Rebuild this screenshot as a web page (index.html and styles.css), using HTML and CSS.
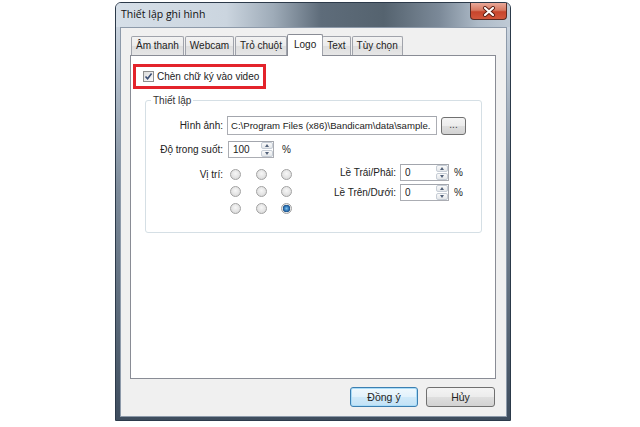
FILE: index.html
```html
<!DOCTYPE html>
<html>
<head>
<meta charset="UTF-8">
<title>Thiết lập ghi hình</title>
<link rel="stylesheet" href="styles.css">
</head>
<body>
<div class="window">
  <div class="titlebar">
    <span class="title">Thiết lập ghi hình</span>
    <span class="close">
      <svg width="14" height="11" viewBox="0 0 14 11">
        <path d="M3 2 L11 9 M11 2 L3 9" stroke="#5a1c12" stroke-width="4" stroke-linecap="round"/>
        <path d="M3 2 L11 9 M11 2 L3 9" stroke="#fff" stroke-width="2.2" stroke-linecap="round"/>
      </svg>
    </span>
  </div>
  <div class="frame">
    <div class="client">
      <div class="tabs">
        <div class="tab">Âm thanh</div>
        <div class="tab">Webcam</div>
        <div class="tab">Trỏ chuột</div>
        <div class="tab active">Logo</div>
        <div class="tab">Text</div>
        <div class="tab">Tùy chọn</div>
      </div>
      <div class="panel">
        <div class="highlight">
          <span class="check">
            <svg width="9" height="9" viewBox="0 0 9 9">
              <path d="M1.5 4.5 L3.6 6.8 L7.6 1.6" fill="none" stroke="#3b4f75" stroke-width="1.6"/>
            </svg>
          </span>
          <span>Chèn chữ ký vào video</span>
        </div>
        <fieldset class="group">
          <legend>Thiết lập</legend>
          <div class="row">
            <span class="lbl">Hình ảnh:</span>
            <span class="edit path">C:\Program Files (x86)\Bandicam\data\sample.</span>
            <span class="btn browse">...</span>
          </div>
          <div class="row">
            <span class="lbl">Độ trong suốt:</span>
            <span class="spin alpha">
              <span class="val">100</span>
              <span class="arrows"><span class="up"><i></i></span><span class="down"><i></i></span></span>
            </span>
            <span class="pct">%</span>
          </div>
          <div class="row pos">
            <span class="lbl top">Vị trí:</span>
            <div class="radios">
              <span class="radio"></span><span class="radio"></span><span class="radio"></span>
              <span class="radio"></span><span class="radio"></span><span class="radio"></span>
              <span class="radio"></span><span class="radio"></span><span class="radio on"></span>
            </div>
            <div class="margins">
              <div class="mrow">
                <span class="mlbl">Lề Trái/Phải:</span>
                <span class="spin small">
                  <span class="val">0</span>
                  <span class="arrows"><span class="up"><i></i></span><span class="down"><i></i></span></span>
                </span>
                <span class="pct">%</span>
              </div>
              <div class="mrow">
                <span class="mlbl">Lề Trên/Dưới:</span>
                <span class="spin small">
                  <span class="val">0</span>
                  <span class="arrows"><span class="up"><i></i></span><span class="down"><i></i></span></span>
                </span>
                <span class="pct">%</span>
              </div>
            </div>
          </div>
        </fieldset>
      </div>
      <div class="buttons">
        <span class="btn default">Đồng ý</span>
        <span class="btn">Hủy</span>
      </div>
    </div>
  </div>
</div>
</body>
</html>
```

FILE: styles.css
```css
* {
box-sizing: border-box;
}
body {
margin: 0;
background-color: #fff;
font-family: "Liberation Sans", Arial, sans-serif;
font-size: 10px;
color: #222;
}
.window {
width: 396px;
height: 419px;
margin: 2px 0 0 115px;
display: flex;
flex-direction: column;
border: 1px solid #2c3a4a;
border-radius: 6px 6px 0 0;
background: linear-gradient(to bottom, #d3dce6 0%, #bfcad6 12%, #7c8a99 45%, #3e4d5e 100%);
}
.titlebar {
height: 24px;
display: flex;
align-items: flex-start;
padding-left: 5px;
border-radius: 5px 5px 0 0;
background: linear-gradient(90deg, #d6dfe8 0%, #cbd5df 28%, #9eabb8 40%, #5e6c7a 52%, #55636f 68%, #7b8998 82%, #aebbc8 92%, #bfcad5 100%);
}
.title {
font-family: "Open Sans", sans-serif;
font-size: 10.5px;
color: #111;
margin-top: 4px;
}
.close {
margin-left: auto;
margin-right: 3px;
width: 37px;
height: 17px;
display: flex;
align-items: center;
justify-content: center;
border: 1px solid #5b2a22;
border-top: none;
border-radius: 0 0 4px 4px;
background: linear-gradient(to bottom, #e9a899 0%, #d77a63 45%, #c7452c 55%, #d2573c 100%);
}
.frame {
flex: 1;
display: flex;
padding: 0 3px 3px 4px;
}
.client {
flex: 1;
display: flex;
flex-direction: column;
background-color: #f0f0f0;
border: 1px solid #8d9aaa;
padding: 6px 10px 0 9px;
}
.tabs {
display: flex;
height: 21px;
padding-left: 1px;
position: relative;
z-index: 1;
font-size: 10px;
}
.tab {
height: 19px;
margin-top: 2px;
margin-right: 1px;
padding: 0 4px;
line-height: 18px;
border: 1px solid #a0a3ab;
border-bottom: none;
border-radius: 2px 2px 0 0;
background: linear-gradient(to bottom, #f3f3f3 0%, #ebebeb 50%, #dedede 51%, #e6e6e6 100%);
}
.tab.active {
height: 22px;
margin-top: 0;
margin-left: -1px;
margin-right: -1px;
padding: 0 6px;
line-height: 19px;
background: #fff;
border-color: #898c95;
}
.panel {
width: 366px;
height: 324px;
background: #fff;
border: 1px solid #898c95;
padding: 8px 0 0 2px;
}
.highlight {
width: 133px;
height: 25px;
display: flex;
align-items: center;
white-space: nowrap;
border: 3px solid #e3232b;
padding-left: 7px;
}
.check {
width: 11px;
height: 11px;
margin-right: 3px;
display: flex;
align-items: center;
justify-content: center;
border: 1px solid #8e8f8f;
background: linear-gradient(135deg, #dcdcdc 0%, #fbfbfb 100%);
}
.group {
width: 337px;
min-width: 0;
margin: 6px 0 0 12px;
padding: 10px 15px 18px 0;
border: 1px solid #d5dfe5;
border-radius: 3px;
}
.group legend {
margin-left: 5px;
padding: 0 2px;
color: #333;
}
.row {
display: flex;
align-items: center;
margin-bottom: 6px;
}
.lbl {
width: 77px;
flex-shrink: 0;
text-align: right;
margin-right: 4px;
}
.edit, .spin {
display: flex;
align-items: center;
background: #fff;
border: 1px solid #abadb3;
border-top-color: #a3a6ad;
}
.path {
width: 210px;
height: 19px;
flex-shrink: 0;
padding-left: 3px;
white-space: nowrap;
overflow: hidden;
font-size: 9.6px;
}
.btn {
display: flex;
align-items: center;
justify-content: center;
border: 1px solid #707070;
border-radius: 3px;
background: linear-gradient(to bottom, #f4f4f4 0%, #ececec 48%, #dedede 52%, #d2d2d2 100%);
}
.browse {
width: 25px;
height: 18px;
flex-shrink: 0;
margin-left: 4px;
color: #444;
padding-bottom: 3px;
}
.spin {
height: 17px;
padding-left: 4px;
}
.spin .val {
flex: 1;
}
.alpha {
width: 46px;
margin-left: 1px;
}
.arrows {
width: 12px;
height: 15px;
display: flex;
flex-direction: column;
gap: 1px;
}
.arrows span {
flex: 1;
display: flex;
align-items: center;
justify-content: center;
border: 1px solid #c6cdd6;
border-radius: 2px;
background: linear-gradient(to bottom, #fafafa, #e4e7ea);
}
.up i {
border-left: 2px solid transparent;
border-right: 2px solid transparent;
border-bottom: 3px solid #53627a;
}
.down i {
border-left: 2px solid transparent;
border-right: 2px solid transparent;
border-top: 3px solid #53627a;
}
.pct {
margin-left: 8px;
}
.pos {
align-items: flex-start;
margin-top: 5px;
margin-bottom: 0;
}
.lbl.top {
margin-top: 5px;
margin-right: 7px;
}
.radios {
display: grid;
grid-template-columns: repeat(3, 11px);
column-gap: 14.5px;
row-gap: 6px;
margin-top: 5px;
}
.radio {
width: 11px;
height: 11px;
border-radius: 50%;
border: 1px solid #a2a2a2;
background: radial-gradient(circle at 50% 40%, #f7f7f7 0%, #e2e2e2 60%, #cfcfcf 100%);
}
.radio.on {
background: radial-gradient(circle, #7cc1ee 0%, #2a6fb0 40%, #1b4f86 55%, #e6e6e6 62%, #d6d6d6 100%);
}
.margins {
margin-left: auto;
margin-right: 3px;
display: flex;
flex-direction: column;
gap: 3px;
}
.mrow {
display: flex;
align-items: center;
justify-content: flex-end;
}
.mlbl {
margin-right: 4px;
}
.small {
width: 49px;
}
.mrow .pct {
margin-left: 5px;
}
.buttons {
display: flex;
justify-content: flex-end;
gap: 8px;
margin-top: 8px;
padding-right: 1px;
}
.buttons .btn {
width: 69px;
height: 20px;
color: #222;
font-size: 10.5px;
}
.buttons .default {
width: 68px;
border-color: #3c7fb1;
background: linear-gradient(to bottom, #f0f8fd 0%, #e2f2fc 48%, #cfe9f9 52%, #c2e2f6 100%);
box-shadow: inset 0 0 0 1px #a9dcf8;
}
```
